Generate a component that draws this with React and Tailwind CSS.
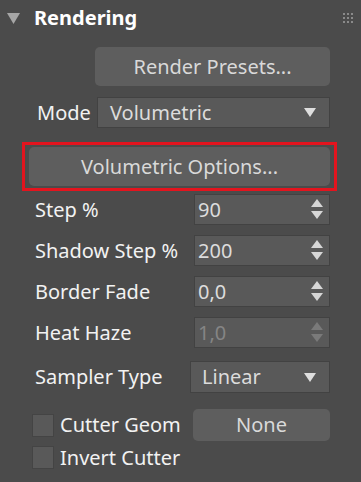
import React from "react";

const font = { fontFamily: '"Noto Sans", "Open Sans", sans-serif' };

function Spinner({ disabled }) {
  const c = disabled ? "#7a7a7a" : "#d6d6d6";
  return (
    <svg width="12" height="21" viewBox="0 0 12 21" className="shrink-0">
      <polygon points="6,0 12,8 0,8" fill={c} />
      <polygon points="0,12 12,12 6,20" fill={c} />
    </svg>
  );
}

function DropTri() {
  return (
    <svg width="12" height="9" viewBox="0 0 12 9" className="shrink-0">
      <polygon points="0,0 12,0 6,9" fill="#dedede" />
    </svg>
  );
}

function NumRow({ label, value, disabled, mt }) {
  return (
    <div className={`flex items-center h-[31px] ${mt}`}>
      <div className="w-[194px] pl-[35px] text-[20px] text-[#f2f2f2] whitespace-nowrap">{label}</div>
      <div className="w-[136px] h-[31px] bg-[#595959] border border-[#424242] flex items-center justify-between pl-[3px] pr-[6px]">
        <span className={`text-[20px] ${disabled ? "text-[#858585]" : "text-[#dcdcdc]"}`}>{value}</span>
        <Spinner disabled={disabled} />
      </div>
    </div>
  );
}

export default function App() {
  return (
    <div className="w-[361px] h-[482px] bg-[#4b4b4b] overflow-hidden leading-none" style={font}>
      {/* Header */}
      <div className="flex items-center h-[36px] pl-[7px] pr-[8px]">
        <svg width="13" height="11" viewBox="0 0 13 11" className="shrink-0">
          <polygon points="0,0 13,0 6.5,11" fill="#a6a6a6" />
        </svg>
        <div className="ml-[14px] text-[20px] font-bold text-white">Rendering</div>
        <div className="ml-auto grid grid-cols-3 gap-[2px]">
          {Array.from({ length: 9 }).map((_, i) => (
            <div key={i} className="w-[2px] h-[2px] bg-[#8a8a8a]" />
          ))}
        </div>
      </div>

      {/* Render Presets */}
      <div className="mt-[11px] ml-[95px] w-[235px] h-[39px] rounded-[5px] bg-[#5e5e5e] flex items-center justify-center text-[20px] text-[#d9d9d9]">
        Render Presets...
      </div>

      {/* Mode */}
      <div className="mt-[11px] flex items-center h-[31px]">
        <div className="w-[97px] pl-[37px] text-[20px] text-[#f2f2f2]">Mode</div>
        <div className="w-[233px] h-[31px] bg-[#595959] border border-[#424242] flex items-center justify-between pl-[12px] pr-[13px]">
          <span className="text-[20px] text-[#dcdcdc]">Volumetric</span>
          <DropTri />
        </div>
      </div>

      {/* Volumetric Options (highlighted) */}
      <div className="mt-[14px] ml-[22px] w-[315px] h-[49px] border-[3px] border-[#e3141e] flex items-center justify-center">
        <div className="w-[301px] h-[39px] rounded-[5px] bg-[#5e5e5e] flex items-center justify-center text-[20px] text-[#d9d9d9]">
          Volumetric Options...
        </div>
      </div>

      <NumRow label="Step %" value="90" mt="mt-[3px]" />
      <NumRow label="Shadow Step %" value="200" mt="mt-[10px]" />
      <NumRow label="Border Fade" value="0,0" mt="mt-[10px]" />
      <NumRow label="Heat Haze" value="1,0" disabled mt="mt-[10px]" />

      {/* Sampler Type */}
      <div className="mt-[13px] flex items-center h-[32px]">
        <div className="w-[190px] pl-[35px] text-[20px] text-[#f2f2f2] whitespace-nowrap">Sampler Type</div>
        <div className="w-[140px] h-[32px] bg-[#595959] border border-[#424242] flex items-center justify-between pl-[11px] pr-[13px]">
          <span className="text-[20px] text-[#dcdcdc]">Linear</span>
          <DropTri />
        </div>
      </div>

      {/* Cutter Geom */}
      <div className="mt-[16px] flex items-center h-[32px]">
        <div className="w-[193px] pl-[32px] flex items-center">
          <div className="w-[22px] h-[23px] bg-[#595959] border border-[#444444] shrink-0" />
          <span className="ml-[6px] text-[20px] text-[#f2f2f2] whitespace-nowrap">Cutter Geom</span>
        </div>
        <div className="w-[137px] h-[32px] rounded-[5px] bg-[#5e5e5e] flex items-center justify-center text-[20px] text-[#d9d9d9]">
          None
        </div>
      </div>

      {/* Invert Cutter */}
      <div className="mt-[5px] pl-[32px] flex items-center h-[23px]">
        <div className="w-[22px] h-[23px] bg-[#595959] border border-[#444444] shrink-0" />
        <span className="ml-[6px] text-[20px] text-[#f2f2f2] whitespace-nowrap">Invert Cutter</span>
      </div>
    </div>
  );
}
